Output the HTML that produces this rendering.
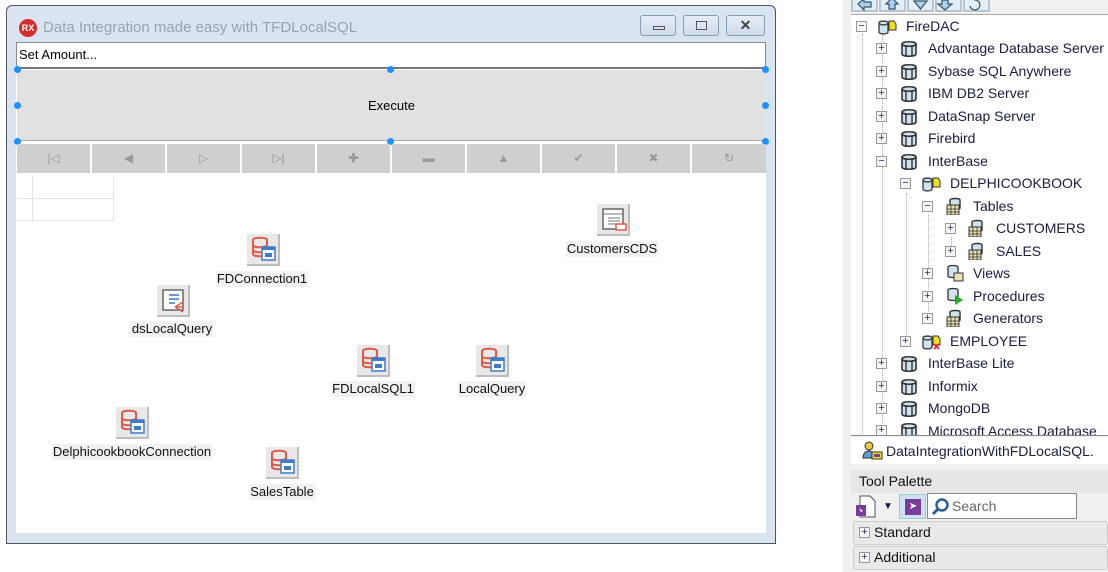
<!DOCTYPE html>
<html><head><meta charset="utf-8">
<style>
*{margin:0;padding:0;box-sizing:border-box}
body{width:1108px;height:572px;background:#fff;position:relative;overflow:hidden;font-family:"Liberation Sans",sans-serif;font-size:13px;color:#000}
.a{position:absolute}
.win{left:6px;top:5px;width:770px;height:539px;background:#d9e4f1;border:1px solid #555;border-radius:6px 6px 0 0}
.tb{position:absolute;top:15px;width:36px;height:21px;border:1px solid #8a9bb3;border-radius:3px;background:linear-gradient(#e6eef8,#cfdbea)}
.nav{position:absolute;top:144px;height:29px;width:73px;background:#cfcfcf;color:#9a9a9a;text-align:center;line-height:29px;font-size:12px}
.h{position:absolute;width:7px;height:7px;border-radius:50%;background:#1e90ff}
.ic{position:absolute;width:33px;height:32px;background:#e8e8e8;border-right:2px solid #bdbdbd;border-bottom:2px solid #bdbdbd}
.lb{position:absolute;background:#f1f1f1;font-size:13px;color:#111;white-space:nowrap;transform:translateX(-50%);padding:0 1px;line-height:16px}
.tr{position:absolute;font-size:14px;color:#1b1b40;white-space:nowrap;line-height:18px}
.ex{position:absolute;width:11px;height:11px;border:1px solid #999;background:#f4f4f4;font-size:11px;line-height:9px;text-align:center;color:#335}
.db{position:absolute;width:20px;height:18px}
</style></head><body>
<svg width="0" height="0" style="position:absolute"><defs>
<g id="dbi"><path d="M6 6c0-3 14-3 14 0v14c0 3-14 3-14 0z" fill="none" stroke="#e05a4a" stroke-width="2"/><path d="M6 11c0 3 14 3 14 0M6 16c0 3 14 3 14 0" fill="none" stroke="#e05a4a" stroke-width="2"/><rect x="15" y="13" width="13" height="13" fill="#fff" stroke="#3d7cc9" stroke-width="1.5"/><rect x="15" y="13" width="13" height="3" fill="#3d7cc9"/><rect x="18" y="19" width="7" height="4" fill="#3d7cc9"/></g>
<g id="srv"><path d="M3 5c0-3 14-3 14 0v10c0 3-14 3-14 0z" fill="#cfe3ef" stroke="#333" stroke-width="1.6"/><path d="M3 5c0 3 14 3 14 0" fill="none" stroke="#333" stroke-width="1.6"/><path d="M7 7v10M13 7v10" stroke="#333" stroke-width="1.4"/></g>
<g id="con"><path d="M2 6c0-2.5 9-2.5 9 0v9c0 2.5-9 2.5-9 0z" fill="#cfe3ef" stroke="#444" stroke-width="1.4"/><path d="M2 6c0 2.5 9 2.5 9 0" fill="none" stroke="#444" stroke-width="1.4"/><path d="M12 4h5l2 3v6h-7z" fill="#f0e020" stroke="#333"/></g>
<g id="tbl"><path d="M5 3c0-2 10-2 10 0v8c0 2-10 2-10 0z" fill="#cfe3ef" stroke="#333" stroke-width="1.4"/><rect x="2" y="8" width="12" height="10" fill="#e8e0b0" stroke="#333"/><path d="M2 12h12M2 15h12M6 8v10M10 8v10" stroke="#333" stroke-width=".8"/></g>
</defs></svg>
<div class="a win"></div>
<div class="a" style="left:19px;top:19px;width:18px;height:18px;border-radius:50%;background:#d62b2b;color:#fff;font-size:9px;font-weight:bold;text-align:center;line-height:18px">RX</div>
<div class="a" style="left:43px;top:19px;font-size:15px;color:#9aa3ad">Data Integration made easy with TFDLocalSQL</div>
<div class="tb" style="left:640px"><div class="a" style="left:12px;top:10px;width:12px;height:4px;border:1px solid #555"></div></div>
<div class="tb" style="left:683px"><div class="a" style="left:12px;top:5px;width:11px;height:9px;border:1px solid #555"></div></div>
<div class="tb" style="left:726px;width:39px;text-align:center;font-weight:bold;font-size:14px;color:#444;line-height:19px">✕</div>
<div class="a" style="left:16px;top:42px;width:750px;height:491px;background:#fff"></div>
<div class="a" style="left:16px;top:42px;width:750px;height:27px;border:1px solid #8a8a8a;border-bottom:2px solid #777;background:#fff;padding:4px 2px;font-size:13px">Set Amount...</div>
<div class="a" style="left:17px;top:70px;width:749px;height:71px;background:#e1e1e1;border-bottom:1px solid #aaa;text-align:center;line-height:72px;font-size:13px">Execute</div>
<div class="h" style="left:14px;top:66px"></div><div class="h" style="left:387px;top:66px"></div><div class="h" style="left:762px;top:66px"></div>
<div class="h" style="left:14px;top:102px"></div><div class="h" style="left:762px;top:102px"></div>
<div class="h" style="left:14px;top:138px"></div><div class="h" style="left:387px;top:138px"></div><div class="h" style="left:762px;top:138px"></div>
<div class="nav" style="left:17px">|◁</div><div class="nav" style="left:92px">◀</div><div class="nav" style="left:167px">▷</div><div class="nav" style="left:242px">▷|</div><div class="nav" style="left:317px;font-weight:bold">✚</div><div class="nav" style="left:392px;font-weight:bold">▬</div><div class="nav" style="left:467px">▲</div><div class="nav" style="left:542px">✔</div><div class="nav" style="left:617px">✖</div><div class="nav" style="left:692px;width:74px">↻</div>
<div class="a" style="left:17px;top:176px;width:97px;height:45px;border-right:1px solid #e4e4e4;border-bottom:1px solid #e4e4e4"></div>
<div class="a" style="left:32px;top:176px;width:1px;height:45px;background:#e4e4e4"></div>
<div class="a" style="left:17px;top:198px;width:97px;height:1px;background:#e4e4e4"></div>

<div class="ic" style="left:247px;top:234px"><svg width="33" height="32"><use href="#dbi"/></svg></div><div class="lb" style="left:262px;top:271px">FDConnection1</div>
<div class="ic" style="left:597px;top:204px"><svg width="33" height="32"><rect x="6" y="5" width="20" height="20" fill="#fff" stroke="#666" stroke-width="1.5"/><path d="M6 10h20M11 14h12M11 17h12M11 20h10" stroke="#777"/><rect x="19" y="20" width="10" height="6" fill="#fff" stroke="#e05a4a" stroke-width="1.5"/></svg></div><div class="lb" style="left:612px;top:241px">CustomersCDS</div>
<div class="ic" style="left:157px;top:285px"><svg width="33" height="32"><rect x="6" y="5" width="20" height="20" fill="#fff" stroke="#666" stroke-width="1.5"/><path d="M12 10h10M12 14h10M12 18h6" stroke="#3d7cc9" stroke-width="1.5"/><path d="M18 22l8-5M18 22l8 0M18 22l8 5" stroke="#e05a4a" stroke-width="1.5"/></svg></div><div class="lb" style="left:172px;top:321px">dsLocalQuery</div>
<div class="ic" style="left:357px;top:345px"><svg width="33" height="32"><use href="#dbi"/></svg></div><div class="lb" style="left:373px;top:381px">FDLocalSQL1</div>
<div class="ic" style="left:476px;top:345px"><svg width="33" height="32"><use href="#dbi"/></svg></div><div class="lb" style="left:492px;top:381px">LocalQuery</div>
<div class="ic" style="left:116px;top:407px"><svg width="33" height="32"><use href="#dbi"/></svg></div><div class="lb" style="left:132px;top:444px">DelphicookbookConnection</div>
<div class="ic" style="left:266px;top:447px"><svg width="33" height="32"><use href="#dbi"/></svg></div><div class="lb" style="left:282px;top:484px">SalesTable</div>

<!-- right panel -->
<div class="a" style="left:843px;top:0;width:265px;height:572px;background:#f0f0f0"></div>
<div class="a" style="left:851px;top:14px;width:257px;height:422px;background:#fff;border-top:1px solid #aaa;border-bottom:1px solid #888"></div>
<svg class="a" style="left:850px;top:0" width="150" height="13">
<g fill="#aed0ee" stroke="#356" stroke-width="1.2"><rect x="2" y="-2" width="25" height="13" fill="#e4ecf4" stroke="#9ab"/><rect x="30" y="-2" width="25" height="13" fill="#e4ecf4" stroke="#9ab"/><rect x="58" y="-2" width="25" height="13" fill="#e4ecf4" stroke="#9ab"/><rect x="86" y="-2" width="25" height="13" fill="#e4ecf4" stroke="#9ab"/><rect x="114" y="-2" width="25" height="13" fill="#e4ecf4" stroke="#9ab"/>
<path d="M8 4l6-5v3h7v5h-7v3z"/><path d="M36 4l6-6 6 6h-3v5h-6v-5z"/><path d="M64 1h13l-6.5 8z"/><path d="M92 0h6v4h4l-7 6-7-6h4z"/><path d="M120 6a5 5 0 1 0 4-6" fill="none"/></g></svg>
<div class="a" style="left:862px;top:34px;width:0;height:400px;border-left:1px dotted #aaa"></div>
<div class="a" style="left:882px;top:34px;width:0;height:400px;border-left:1px dotted #aaa"></div>
<div class="a" style="left:906px;top:193px;width:0;height:148px;border-left:1px dotted #aaa"></div>
<div class="a" style="left:928px;top:215px;width:0;height:105px;border-left:1px dotted #aaa"></div>
<div class="a" style="left:951px;top:237px;width:0;height:15px;border-left:1px dotted #aaa"></div>

<div class="ex" style="left:856px;top:21px">−</div><svg class="db" style="left:877px;top:17px"><use href="#con"/></svg><div class="tr" style="left:906px;top:17px">FireDAC</div>
<div class="ex" style="left:876px;top:43px">+</div><svg class="db" style="left:899px;top:39px"><use href="#srv"/></svg><div class="tr" style="left:928px;top:39px">Advantage Database Server</div>
<div class="ex" style="left:876px;top:66px">+</div><svg class="db" style="left:899px;top:62px"><use href="#srv"/></svg><div class="tr" style="left:928px;top:62px">Sybase SQL Anywhere</div>
<div class="ex" style="left:876px;top:88px">+</div><svg class="db" style="left:899px;top:84px"><use href="#srv"/></svg><div class="tr" style="left:928px;top:84px">IBM DB2 Server</div>
<div class="ex" style="left:876px;top:111px">+</div><svg class="db" style="left:899px;top:107px"><use href="#srv"/></svg><div class="tr" style="left:928px;top:107px">DataSnap Server</div>
<div class="ex" style="left:876px;top:133px">+</div><svg class="db" style="left:899px;top:129px"><use href="#srv"/></svg><div class="tr" style="left:928px;top:129px">Firebird</div>
<div class="ex" style="left:876px;top:156px">−</div><svg class="db" style="left:899px;top:152px"><use href="#srv"/></svg><div class="tr" style="left:928px;top:152px">InterBase</div>
<div class="ex" style="left:900px;top:178px">−</div><svg class="db" style="left:921px;top:174px"><use href="#con"/></svg><div class="tr" style="left:950px;top:174px">DELPHICOOKBOOK</div>
<div class="ex" style="left:922px;top:201px">−</div><svg class="db" style="left:945px;top:197px"><use href="#tbl"/></svg><div class="tr" style="left:973px;top:197px">Tables</div>
<div class="ex" style="left:945px;top:223px">+</div><svg class="db" style="left:967px;top:219px"><use href="#tbl"/></svg><div class="tr" style="left:996px;top:219px">CUSTOMERS</div>
<div class="ex" style="left:945px;top:246px">+</div><svg class="db" style="left:967px;top:242px"><use href="#tbl"/></svg><div class="tr" style="left:996px;top:242px">SALES</div>
<div class="ex" style="left:922px;top:268px">+</div><svg class="db" style="left:945px;top:264px"><path d="M3 3c0-2 10-2 10 0v9c0 2-10 2-10 0z" fill="#cfe3ef" stroke="#333" stroke-width="1.3"/><rect x="9" y="9" width="9" height="8" fill="#e8e0b0" stroke="#333"/></svg><div class="tr" style="left:973px;top:264px">Views</div>
<div class="ex" style="left:922px;top:291px">+</div><svg class="db" style="left:945px;top:287px"><path d="M3 3c0-2 10-2 10 0v9c0 2-10 2-10 0z" fill="#cfe3ef" stroke="#333" stroke-width="1.3"/><path d="M10 8l8 5-8 5z" fill="#2a2"/></svg><div class="tr" style="left:973px;top:287px">Procedures</div>
<div class="ex" style="left:922px;top:313px">+</div><svg class="db" style="left:945px;top:309px"><use href="#tbl"/></svg><div class="tr" style="left:973px;top:309px">Generators</div>
<div class="ex" style="left:900px;top:336px">+</div><svg class="db" style="left:921px;top:332px"><use href="#con"/><path d="M13 12l5 5M18 12l-5 5" stroke="#e22" stroke-width="1.6"/></svg><div class="tr" style="left:950px;top:332px">EMPLOYEE</div>
<div class="ex" style="left:876px;top:358px">+</div><svg class="db" style="left:899px;top:354px"><use href="#srv"/></svg><div class="tr" style="left:928px;top:354px">InterBase Lite</div>
<div class="ex" style="left:876px;top:381px">+</div><svg class="db" style="left:899px;top:377px"><use href="#srv"/></svg><div class="tr" style="left:928px;top:377px">Informix</div>
<div class="ex" style="left:876px;top:403px">+</div><svg class="db" style="left:899px;top:399px"><use href="#srv"/></svg><div class="tr" style="left:928px;top:399px">MongoDB</div>
<div class="a" style="left:851px;top:421px;width:257px;height:14px;overflow:hidden"><div class="ex" style="left:25px;top:4px">+</div><svg class="db" style="left:48px;top:0"><use href="#srv"/></svg><div class="tr" style="left:77px;top:1px">Microsoft Access Database</div></div>

<div class="a" style="left:851px;top:437px;width:257px;height:27px;background:#fff"></div>
<svg class="a" style="left:862px;top:441px" width="22" height="20"><circle cx="7" cy="5" r="4" fill="#e8c840" stroke="#333"/><path d="M1 17c0-5 3-7 6-7s6 2 6 7z" fill="#5b9bd5" stroke="#333"/><rect x="10" y="11" width="10" height="7" fill="#f0e020" stroke="#333"/><rect x="12" y="13" width="6" height="3" fill="#7a3c9a"/></svg>
<div class="tr" style="left:886px;top:442px">DataIntegrationWithFDLocalSQL.</div>
<div class="a" style="left:851px;top:470px;width:257px;height:23px;background:#e6e6e6"></div>
<div class="tr" style="left:859px;top:472px;color:#111">Tool Palette</div>
<svg class="a" style="left:855px;top:495px" width="24" height="24"><path d="M5 1h10l5 5v16H5z" fill="#fff" stroke="#555"/><rect x="1" y="10" width="10" height="11" fill="#7a3c9a"/><path d="M4 13l4 3-2 1z" fill="#fff"/></svg>
<div class="tr" style="left:883px;top:498px;font-size:10px">▼</div>
<div class="a" style="left:899px;top:494px;width:27px;height:25px;background:#cde3f5;border:1px solid #9cc"><div class="a" style="left:5px;top:4px;width:16px;height:16px;background:#7a3c9a;color:#fff;font-size:10px;text-align:center;line-height:16px">➤</div></div>
<div class="a" style="left:927px;top:493px;width:150px;height:26px;border:1px solid #888;background:#fff"></div>
<svg class="a" style="left:930px;top:497px" width="20" height="20"><circle cx="12" cy="8" r="5.5" fill="none" stroke="#2a5d9a" stroke-width="2.5"/><path d="M8 12l-5 5" stroke="#2a5d9a" stroke-width="3"/></svg>
<div class="tr" style="left:952px;top:497px;color:#666">Search</div>
<div class="a" style="left:853px;top:521px;width:255px;height:24px;background:#e9e9e9;border:1px solid #ccc;border-radius:3px"></div>
<div class="ex" style="left:859px;top:527px">+</div><div class="tr" style="left:874px;top:523px;color:#111">Standard</div>
<div class="a" style="left:853px;top:546px;width:255px;height:24px;background:#e9e9e9;border:1px solid #ccc;border-radius:3px"></div>
<div class="ex" style="left:859px;top:552px">+</div><div class="tr" style="left:874px;top:548px;color:#111">Additional</div>
</body></html>
